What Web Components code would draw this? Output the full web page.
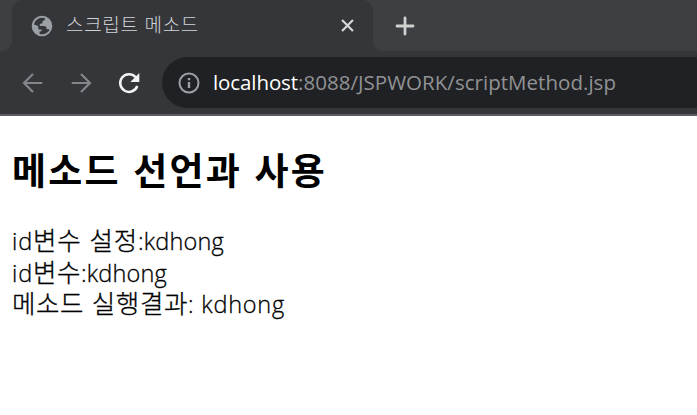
<!DOCTYPE html>
<html lang="ko">
<head>
<meta charset="utf-8">
<title>스크립트 메소드</title>
<style>
html,body{margin:0;height:100%;overflow:hidden;background:#fff}
body{font-family:"Open Sans","Noto Sans CJK KR",sans-serif}
</style>
</head>
<body>
<browser-window></browser-window>
<script>
// Inline run whose tracking is adjusted so that it fills the width in `w`.
class TextRun extends HTMLElement{
  connectedCallback(){
    this.attachShadow({mode:'open'}).innerHTML=`<style>:host{display:inline-block;white-space:pre}span{display:inline-block;white-space:pre}</style><span><slot></slot></span>`;
    const w=+this.getAttribute('w'), s=this.shadowRoot.querySelector('span');
    const n=[...this.textContent].length;
    s.style.letterSpacing=(w-s.getBoundingClientRect().width)/n+'px';
    this.style.width=w+'px';
  }
}
class UiIcon extends HTMLElement{
  connectedCallback(){
    const shapes={
      globe:'<circle cx="12" cy="12" r="10.3" fill="#9aa0a6"/><path fill="#35363a" d="M4 10.500C4.800 6.700 8 3.900 12 3.700c1.200 0 2.100.2 3.100.6-.2 1.700-1 2.600-2.600 2.700l-.1 2.200-2.600.7v2.200h3.900c2.200 0 3 1.200 3 3.100h1.700c.5 0 .8.300 1.100.8-1.500 2.600-4.200 4.200-7.400 4.300-1 0-1.600-.1-2.500-.4v-2.400c1.500 0 2.200-.6 2.200-2H9.400c-.8 0-1.200-.7-1.200-1.500v-2z"/>',
      close:'<path d="m6.300 6.300 11.400 11.400M17.700 6.300 6.300 17.700" stroke="#d5d7d8" stroke-width="2.300"/>',
      plus:'<path d="M12 4v16M4 12h16" stroke="#d0d0ce" stroke-width="2.800" stroke-linecap="round"/>',
      back:'<path d="M21.300 12H3M12 3l-9 9 9 9" fill="none" stroke="#85868a" stroke-width="2.200"/>',
      forward:'<path d="M2.700 12H21M12 3l9 9-9 9" fill="none" stroke="#85868a" stroke-width="2.200"/>',
      reload:'<path d="M20.300 15A8.800 8.800 0 1 1 18.500 6.100" fill="none" stroke="#f1f3f4" stroke-width="2.500"/><path d="M22.300 2v9h-9z" fill="#f1f3f4"/>',
      info:'<circle cx="12" cy="12" r="9.500" fill="none" stroke="#9aa0a6" stroke-width="2"/><path d="M12 11v6M12 7v2.300" stroke="#9aa0a6" stroke-width="2.400"/>'
    };
    this.attachShadow({mode:'open'}).innerHTML=`<style>:host{display:block;flex:none;width:var(--size,24px);height:var(--size,24px)}svg{display:block;width:100%;height:100%}</style><svg viewBox="0 0 24 24">${shapes[this.getAttribute('name')]}</svg>`;
  }
}
class TabStrip extends HTMLElement{
  connectedCallback(){
    this.attachShadow({mode:'open'}).innerHTML=`<style>
    :host{display:flex;height:51px;background:#35363a}
    .left{width:12px;background:#3c4043;border-bottom-right-radius:10px}
    .mid{width:361px;background:#3c4043}
    .tab{height:51px;box-sizing:border-box;background:#35363a;border-radius:11px 11px 0 0;display:flex;align-items:center;padding-left:18px}
    .title{margin-left:12px;width:270px;color:#d0d3d7;font:300 19px/26px "Noto Sans CJK KR",sans-serif;padding-bottom:3px}
    .right{flex:1;background:#3c4043;border-bottom-left-radius:10px;display:flex;align-items:center;padding-left:20px}
    </style><div class="left"></div><div class="mid"><div class="tab"><ui-icon name="globe"></ui-icon><div class="title"><text-run w="133">스크립트 메소드</text-run></div><ui-icon name="close" style="--size:23px"></ui-icon></div></div><div class="right"><ui-icon name="plus"></ui-icon></div>`;
  }
}
class AddressBar extends HTMLElement{
  connectedCallback(){
    this.attachShadow({mode:'open'}).innerHTML=`<style>
    :host{display:flex;height:65px;box-sizing:border-box;background:#35363a;border-bottom:2px solid #5c5b60;padding:6px 0 6px 21px}
    .nav{width:141px;display:flex;align-items:center;gap:24px}
    .pill{flex:1;background:#202124;border-radius:26px 0 0 26px;display:flex;align-items:center;padding-left:15px}
    .url{margin-left:12px;padding-bottom:2px;font:20.500px/28px "Open Sans",sans-serif;color:#919395;white-space:nowrap;display:flex}
    .host{color:#fff}
    </style><div class="nav"><ui-icon name="back"></ui-icon><ui-icon name="forward"></ui-icon><ui-icon name="reload"></ui-icon></div><div class="pill"><ui-icon name="info"></ui-icon><div class="url"><text-run class="host" w="85">localhost</text-run><text-run w="318">:8088/JSPWORK/scriptMethod.jsp</text-run></div></div>`;
  }
}
class PageContent extends HTMLElement{
  connectedCallback(){
    this.attachShadow({mode:'open'}).innerHTML=`<style>
    :host{display:block;padding:28px 12px;color:#000}
    h2{margin:0 0 32px;font:700 37px/50px "Noto Sans CJK KR",sans-serif}
    h2 text-run{vertical-align:top}
    p{margin:0;height:31.500px;display:flex;align-items:baseline;font:300 23.500px/31.500px "Open Sans",sans-serif;-webkit-text-stroke:.3px #000}
    .ko{font-family:"Liberation Sans","Noto Sans CJK KR",sans-serif;font-size:25.500px}
    </style>
    <h2><text-run w="315">메소드 선언과 사용</text-run></h2>
    <p><text-run w="21">id</text-run><text-run class="ko" w="105">변수 설정</text-run><text-run w="86">:kdhong</text-run></p>
    <p><text-run w="21">id</text-run><text-run class="ko" w="48">변수</text-run><text-run w="86">:kdhong</text-run></p>
    <p><text-run class="ko" w="176">메소드 실행결과</text-run><text-run w="97">: kdhong</text-run></p>`;
  }
}
class BrowserWindow extends HTMLElement{
  connectedCallback(){
    this.attachShadow({mode:'open'}).innerHTML=`<style>:host{display:flex;flex-direction:column;height:100vh}page-content{flex:1}</style><tab-strip></tab-strip><address-bar></address-bar><page-content></page-content>`;
  }
}
customElements.define('text-run',TextRun);
customElements.define('ui-icon',UiIcon);
customElements.define('tab-strip',TabStrip);
customElements.define('address-bar',AddressBar);
customElements.define('page-content',PageContent);
customElements.define('browser-window',BrowserWindow);
</script>
</body>
</html>
